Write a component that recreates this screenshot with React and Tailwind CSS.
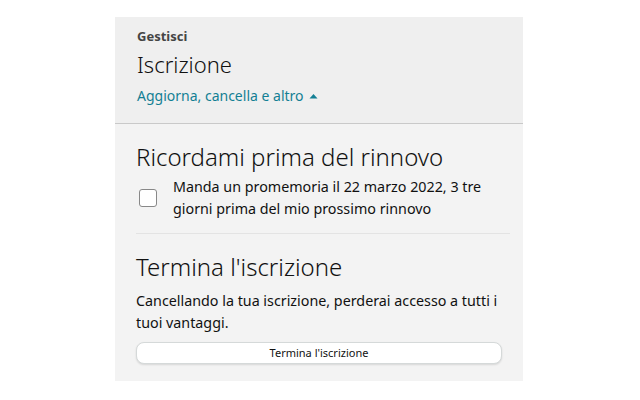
export default function App() {
  return (
    <div className="w-[640px] h-[400px] bg-white flex justify-center pt-[17px]" style={{ fontFamily: '"Noto Sans", "Open Sans", sans-serif' }}>
      <div className="w-[408px] h-[364px] ml-[-2px] bg-[#f3f3f3] flex flex-col">
        {/* Header */}
        <div className="bg-[#efefef] border-b border-[#c9c9c9] px-[22px] pt-[11px] h-[107px]">
          <div className="text-[13px] font-bold text-[#444] leading-[16px]">Gestisci</div>
          <div className="text-[22px] font-light text-[#111] leading-[28px] mt-[6px]">Iscrizione</div>
          <div className="text-[14px] text-[#137f94] leading-[18px] mt-[9px] flex items-center gap-[5px]">
            Aggiorna, cancella e altro
            <svg width="9" height="6" viewBox="0 0 9 6"><path d="M0.5 5.5 L4.5 1 L8.5 5.5 Z" fill="#137f94" /></svg>
          </div>
        </div>

        {/* Reminder */}
        <div className="px-[21px] pt-[18px]">
          <div className="text-[24px] font-light text-[#111] leading-[30px]">Ricordami prima del rinnovo</div>
          <div className="flex items-center gap-[16px] mt-[4px] pl-[3px]">
            <div className="w-[18px] h-[18px] shrink-0 rounded-[3px] border border-[#888] bg-white" />
            <div className="text-[14.3px] text-[#111] leading-[22px]">
              Manda un promemoria il 22 marzo 2022, 3 tre<br />giorni prima del mio prossimo rinnovo
            </div>
          </div>
          <div className="border-b border-[#e3e3e3] mt-[13px] mr-[-8px]" />
        </div>

        {/* Cancel */}
        <div className="px-[21px] pt-[18px]">
          <div className="text-[24px] font-light text-[#111] leading-[30px]">Termina l'iscrizione</div>
          <div className="text-[14.3px] text-[#111] leading-[22px] mt-[8px]">
            Cancellando la tua iscrizione, perderai accesso a tutti i tuoi vantaggi.
          </div>
          <button className="mt-[8px] w-full h-[22px] bg-white rounded-[8px] border border-[#d5d9d9] shadow-[0_1px_2px_rgba(0,0,0,0.12)] text-[11px] text-[#111]">
            Termina l'iscrizione
          </button>
        </div>
      </div>
    </div>
  );
}
